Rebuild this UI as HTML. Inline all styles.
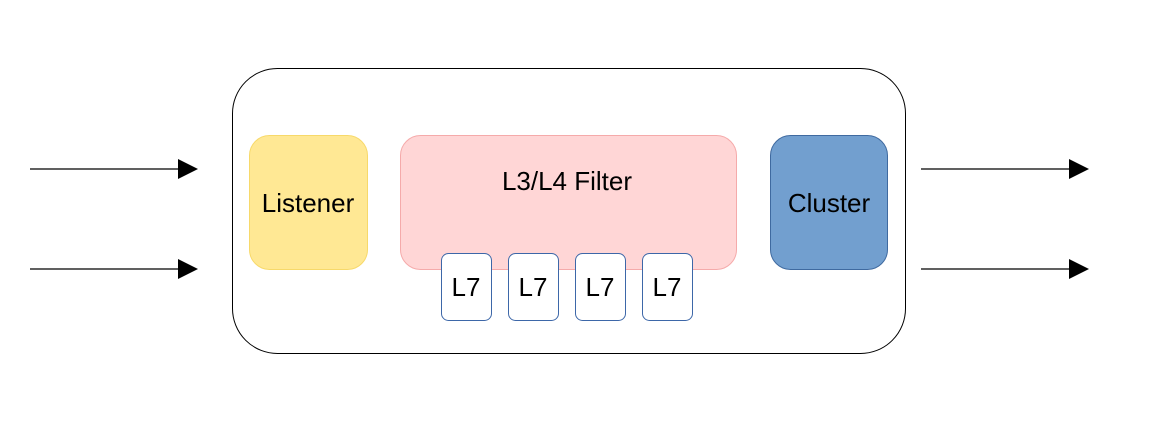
<!DOCTYPE html>
<html><head><style>body{margin:0;background:#fff}</style></head><body>
<svg width="1162" height="416" xmlns="http://www.w3.org/2000/svg" font-family="Liberation Sans, sans-serif" font-size="26">
<rect x="0" y="0" width="1162" height="416" fill="#fff"/>
<rect x="232.5" y="68.5" width="673" height="285" rx="45" fill="#fff" stroke="#000" stroke-width="1"/>
<g stroke="#000" stroke-width="1.3">
<line x1="30" y1="169" x2="182" y2="169"/><line x1="30" y1="269" x2="182" y2="269"/>
<line x1="921" y1="169" x2="1073" y2="169"/><line x1="921" y1="269" x2="1073" y2="269"/>
</g>
<g fill="#000">
<polygon points="178,159 198,169 178,179"/><polygon points="178,259 198,269 178,279"/>
<polygon points="1069,159 1089,169 1069,179"/><polygon points="1069,259 1089,269 1069,279"/>
</g>
<rect x="249.5" y="135.5" width="118" height="134" rx="20" fill="#ffe894" stroke="#f7d96a"/>
<text x="308" y="212" text-anchor="middle">Listener</text>
<rect x="400.5" y="135.5" width="336" height="134" rx="20" fill="#ffd6d6" stroke="#f5aaaa"/>
<text x="567" y="190" text-anchor="middle">L3/L4 Filter</text>
<rect x="770.5" y="135.5" width="117" height="134" rx="20" fill="#729fcf" stroke="#3f6aa0"/>
<text x="829" y="212" text-anchor="middle">Cluster</text>
<g fill="#fff" stroke="#3d67a8">
<rect x="441.5" y="253.5" width="50" height="67" rx="7"/>
<rect x="508.5" y="253.5" width="50" height="67" rx="7"/>
<rect x="575.5" y="253.5" width="50" height="67" rx="7"/>
<rect x="642.5" y="253.5" width="50" height="67" rx="7"/>
</g>
<g text-anchor="middle">
<text x="466" y="296">L7</text><text x="533" y="296">L7</text><text x="600" y="296">L7</text><text x="667" y="296">L7</text>
</g>
</svg>
</body></html>
